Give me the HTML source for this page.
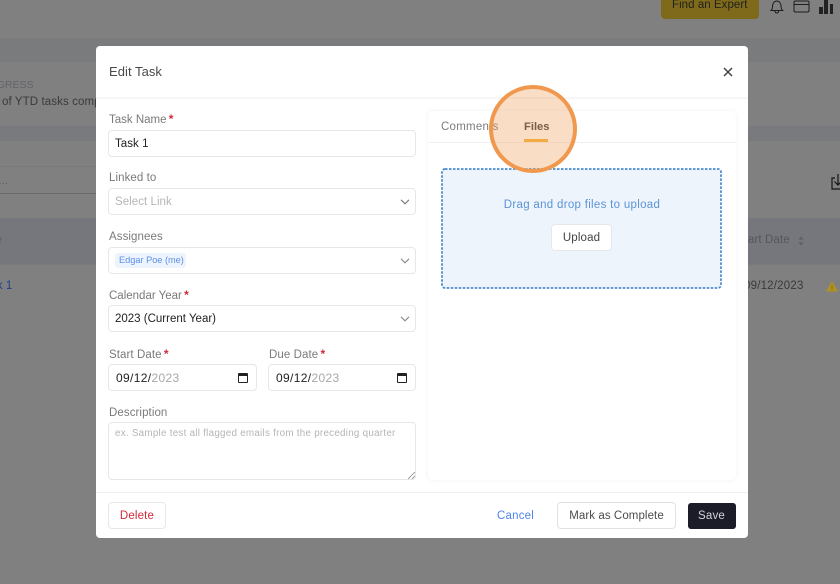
<!DOCTYPE html>
<html><head><meta charset="utf-8"><style>
html,body{margin:0;padding:0;width:840px;height:584px;overflow:hidden;background:#808080}
#r{position:absolute;left:0;top:0;width:840px;height:584px;overflow:hidden;background:#808080;font-family:"Liberation Sans",sans-serif;filter:blur(.35px)}
.a{position:absolute;white-space:nowrap;box-sizing:border-box}
.t{font-size:11.5px;line-height:14px;color:#7a7a7a;letter-spacing:.08px}
.i{background:#fff;border:1px solid #e6e7ea;border-radius:4px;height:27px;font-size:11.5px;line-height:26px;padding-left:6px;color:#2a2a2a;letter-spacing:.05px}
.s{color:#cf2a3c;font-size:12px;font-weight:bold;margin-left:-1px}
.d{font-size:12px;letter-spacing:.35px;padding-left:7px}
svg{position:absolute;overflow:visible}
</style></head><body><div id="r">
<div class="a" style="left:0;top:38px;width:840px;height:24px;background:#7a7b7d"></div>
<div class="a" style="left:0;top:126px;width:840px;height:15px;background:#797a7d"></div>
<div class="a" style="left:0;top:166px;width:96px;height:28px;border-top:1px solid #7a7a7a;border-bottom:1px solid #6a6a6a"></div>
<div class="a" style="left:0;top:218px;width:840px;height:46px;background:#75777c"></div>
<div class="a" style="left:0;top:264px;width:840px;height:1px;background:#7a7a7a"></div>
<div class="a" style="left:-26px;top:78px;font-size:10.500px;line-height:14px;color:#606268">PROGRESS</div>
<div class="a" style="left:2px;top:95px;font-size:11.5px;line-height:14px;color:#3a3a3a;letter-spacing:.1px">of YTD tasks comp</div>
<div class="a" style="left:-34px;top:174px;font-size:10.5px;line-height:14px;color:#5f5f5f">Search...</div>
<div class="a" style="left:-21px;top:279px;font-size:11.5px;line-height:14px;color:#1c3f8f">Task 1</div>
<div class="a" style="left:-4px;top:233px;font-size:11px;color:#5d5f64;line-height:14px">e</div>
<div class="a" style="left:661px;top:-10px;width:98px;height:29px;background:#7f6a1c;border-radius:4px"></div>
<div class="a" style="left:672px;top:-2px;font-size:11.5px;line-height:14px;color:#22221a;letter-spacing:.05px">Find an Expert</div>
<svg style="left:769px;top:0" width="16" height="15" viewBox="0 0 16 15" fill="none" stroke="#1d1d1d" stroke-width="1"><path d="M2 10.500c1.200-1 1.500-2 1.500-4 0-3 1.800-5.500 4.300-5.500s4.300 2.500 4.300 5.500c0 2 .4 3 1.600 4zM6 11c0 1.300.8 2 1.800 2s1.800-.7 1.800-2"/></svg>
<svg style="left:793px;top:-1px" width="17" height="15" viewBox="0 0 17 15" fill="none" stroke="#1d1d1d" stroke-width="1"><path d="M1 3.500c0-1 .5-1.500 1.500-1.500h12c1 0 1.500.5 1.500 1.500v8c0 1-.5 1.500-1.500 1.500h-12c-1 0-1.500-.5-1.500-1.500zM1 5.500h15"/></svg>
<div class="a" style="left:819px;top:7px;width:3.500px;height:7px;background:#222"></div>
<div class="a" style="left:824px;top:0;width:3.500px;height:14px;background:#222"></div>
<div class="a" style="left:829.500px;top:4px;width:3.500px;height:10px;background:#222"></div>
<svg style="left:831px;top:172px" width="12" height="18" viewBox="0 0 12 18" fill="none" stroke="#151515" stroke-width="1.2"><path d="M4 6H1v11h11M7 2v11M3.500 9.500 7 13l3.500-3.500"/></svg>
<div class="a" style="left:748px;top:233px;font-size:11.500px;line-height:14px;color:#55575c;letter-spacing:.1px">art Date</div>
<svg style="left:797.500px;top:236px" width="6" height="10" viewBox="0 0 7 11" fill="#5f6166"><path d="M3.500 0 6.500 4h-6zM3.500 11 .5 7h6z"/></svg>
<div class="a" style="left:744px;top:279px;font-size:11.500px;line-height:14px;color:#3a3a3a;letter-spacing:.2px">09/12/2023</div>
<svg style="left:826px;top:281px" width="12" height="11" viewBox="0 0 11 11" preserveAspectRatio="none"><path d="M5.500 0 11 10.500H0z" fill="#b09020"/><path d="M5.100 4h.8v3.500h-.8zM5.100 8.300h.8v.9h-.8z" fill="#7a6c2c"/></svg>

<div class="a" style="left:96px;top:46px;width:652px;height:492px;background:#fff;border-radius:4px"></div>
<div class="a" style="left:96px;top:97px;width:652px;height:2px;background:#f6f6f7"></div>
<div class="a" style="left:96px;top:492px;width:652px;height:1px;background:#f0f0f2"></div>
<div class="a" style="left:109px;top:63px;font-size:13px;line-height:17px;color:#4a4a4a;letter-spacing:.05px">Edit Task</div>
<svg style="left:723px;top:67px" width="10" height="10" viewBox="0 0 10 10" fill="none" stroke="#444" stroke-width="1.500"><path d="M1 1l8 8M9 1l-8 8"/></svg>

<div class="a t" style="left:109px;top:112px;letter-spacing:0">Task Name <span class="s">*</span></div>
<div class="a i" style="left:108px;top:130px;width:308px;color:#222">Task 1</div>
<div class="a t" style="left:109px;top:171px">Linked to</div>
<div class="a i" style="left:108px;top:188px;width:308px;color:#b5b5b5">Select Link</div>
<svg style="left:400px;top:199px" width="10" height="6" viewBox="0 0 10 6" fill="none" stroke="#7b7b7b" stroke-width="1.100"><path d="M1 .8l4 4 4-4"/></svg>
<div class="a t" style="left:109px;top:229.500px">Assignees</div>
<div class="a i" style="left:108px;top:247px;width:308px"></div>
<div class="a" style="left:115px;top:253px;width:71px;height:15px;background:#eef4fe;border-radius:3px;font-size:9.200px;line-height:15px;color:#5a8fe8;padding-left:4px">Edgar Poe (me)</div>
<svg style="left:400px;top:258px" width="10" height="6" viewBox="0 0 10 6" fill="none" stroke="#8a8a8a" stroke-width="1.100"><path d="M1 .8l4 4 4-4"/></svg>
<div class="a t" style="left:109px;top:288px;letter-spacing:0">Calendar Year <span class="s">*</span></div>
<div class="a i" style="left:108px;top:305px;width:308px;color:#222;letter-spacing:0">2023 (Current Year)</div>
<svg style="left:400px;top:316px" width="10" height="6" viewBox="0 0 10 6" fill="none" stroke="#8a8a8a" stroke-width="1.100"><path d="M1 .8l4 4 4-4"/></svg>
<div class="a t" style="left:109px;top:346.500px">Start Date <span class="s">*</span></div>
<div class="a i d" style="left:108px;top:364px;width:149px;color:#222">09/12/<span style="color:#a8a8a8">2023</span></div>
<svg style="left:238px;top:373px" width="10" height="10" viewBox="0 0 10 10"><path fill="#222" fill-rule="evenodd" d="M1 0h8a1 1 0 0 1 1 1v8a1 1 0 0 1-1 1H1a1 1 0 0 1-1-1V1a1 1 0 0 1 1-1zM1 3v6h8V3z"/></svg>
<div class="a t" style="left:269px;top:346.500px">Due Date <span class="s">*</span></div>
<div class="a i d" style="left:268px;top:364px;width:148px;color:#222">09/12/<span style="color:#a8a8a8">2023</span></div>
<svg style="left:397px;top:373px" width="10" height="10" viewBox="0 0 10 10"><path fill="#222" fill-rule="evenodd" d="M1 0h8a1 1 0 0 1 1 1v8a1 1 0 0 1-1 1H1a1 1 0 0 1-1-1V1a1 1 0 0 1 1-1zM1 3v6h8V3z"/></svg>
<div class="a t" style="left:109px;top:405.500px">Description</div>
<div class="a" style="left:108px;top:422px;width:308px;height:58px;background:#fff;border:1px solid #e6e7ea;border-radius:4px;font-size:9.800px;line-height:21px;padding-left:6px;color:#b5b5b5;letter-spacing:.27px">ex. Sample test all flagged emails from the preceding quarter</div>
<svg style="left:408px;top:472px" width="7" height="7" viewBox="0 0 7 7" stroke="#8a8a8a" stroke-width=".8"><path d="M0 7 7 0M4 7l3-3"/></svg>

<div class="a" style="left:428px;top:111px;width:308px;height:369px;background:#fff;border-radius:5px;box-shadow:0 0 4px rgba(90,110,170,.1)"></div>
<div class="a" style="left:428px;top:142px;width:308px;height:1px;background:#f1f1f3"></div>
<div class="a" style="left:441px;top:120px;font-size:11.500px;line-height:14px;color:#7d7d7d;letter-spacing:.25px">Comments</div>
<div class="a" style="left:524px;top:120px;font-size:11.200px;line-height:14px;color:#444;font-weight:bold">Files</div>
<div class="a" style="left:524px;top:139px;width:24px;height:3px;background:#f3b63f"></div>
<svg style="left:441px;top:168px" width="281" height="121" viewBox="0 0 281 121"><rect x="1" y="1" width="279" height="119" rx="3" fill="#eef4fc" stroke="#4a8bd0" stroke-width="1.800" stroke-dasharray="2.500 1.500"/></svg>
<div class="a" style="left:441px;top:198px;width:282px;text-align:center;font-size:11.500px;line-height:14px;color:#5b93d6;letter-spacing:.3px">Drag and drop files to upload</div>
<div class="a" style="left:551px;top:224px;width:61px;height:27px;background:#fff;border:1px solid #e5e7ea;border-radius:4px;text-align:center;font-size:11.500px;line-height:26px;color:#444;letter-spacing:.15px">Upload</div>
<div class="a" style="left:489px;top:85px;width:88px;height:88px;border-radius:50%;background:rgba(240,150,75,.32);border:4px solid #f0984e"></div>

<div class="a" style="left:108px;top:502px;width:58px;height:27px;background:#fff;border:1px solid #e6e7ea;border-radius:4px;text-align:center;font-size:11.500px;line-height:27px;color:#cf2a3c;letter-spacing:.15px">Delete</div>
<div class="a" style="left:497px;top:509px;font-size:11.500px;line-height:14px;color:#4f86f0;letter-spacing:.2px">Cancel</div>
<div class="a" style="left:557px;top:502px;width:119px;height:27px;background:#fff;border:1px solid #e1e2e5;border-radius:4px;text-align:center;font-size:11.500px;line-height:27px;color:#4c4c4c;letter-spacing:.08px">Mark as Complete</div>
<div class="a" style="left:687.500px;top:502.500px;width:48px;height:26px;background:#1b1c28;border-radius:3px;text-align:center;font-size:11.500px;line-height:26px;color:#d5d5d8;letter-spacing:.2px">Save</div>
</div></body></html>
